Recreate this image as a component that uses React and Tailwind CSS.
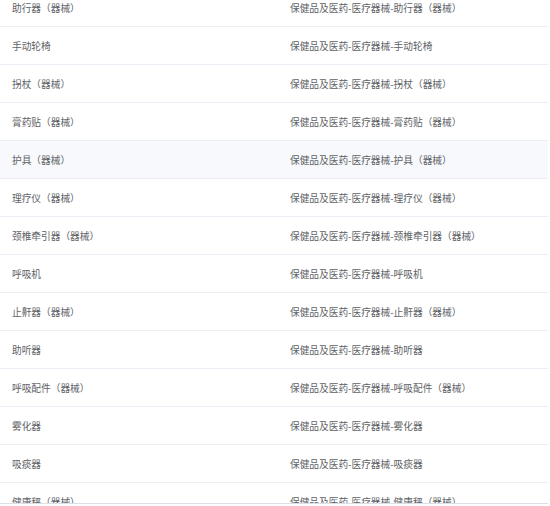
import React from "react";

const rows = [
  "助行器（器械）",
  "手动轮椅",
  "拐杖（器械）",
  "膏药贴（器械）",
  "护具（器械）",
  "理疗仪（器械）",
  "颈椎牵引器（器械）",
  "呼吸机",
  "止鼾器（器械）",
  "助听器",
  "呼吸配件（器械）",
  "雾化器",
  "吸痰器",
  "健康秤（器械）",
];

export default function App() {
  return (
    <div
      className="w-[550px] h-[506px] bg-white overflow-hidden"
      style={{ fontFamily: '"Noto Sans CJK SC", "Noto Sans", sans-serif' }}
    >
      <div className="w-[548px] h-[504px] overflow-hidden border-b border-[#dcdfe6]">
        <div className="-mt-[11px]">
          {rows.map((name, i) => (
            <div
              key={name}
              className={`flex h-[38px] items-center pt-[2px] border-b border-[#ebeef5] text-[9.7px] text-[#606266] ${
                i === 4 ? "bg-[#f7f9fc]" : "bg-white"
              }`}
            >
              <div className="w-[278px] pl-3">{name}</div>
              <div className="flex-1 pl-3">保健品及医药-医疗器械-{name}</div>
            </div>
          ))}
        </div>
      </div>
    </div>
  );
}
